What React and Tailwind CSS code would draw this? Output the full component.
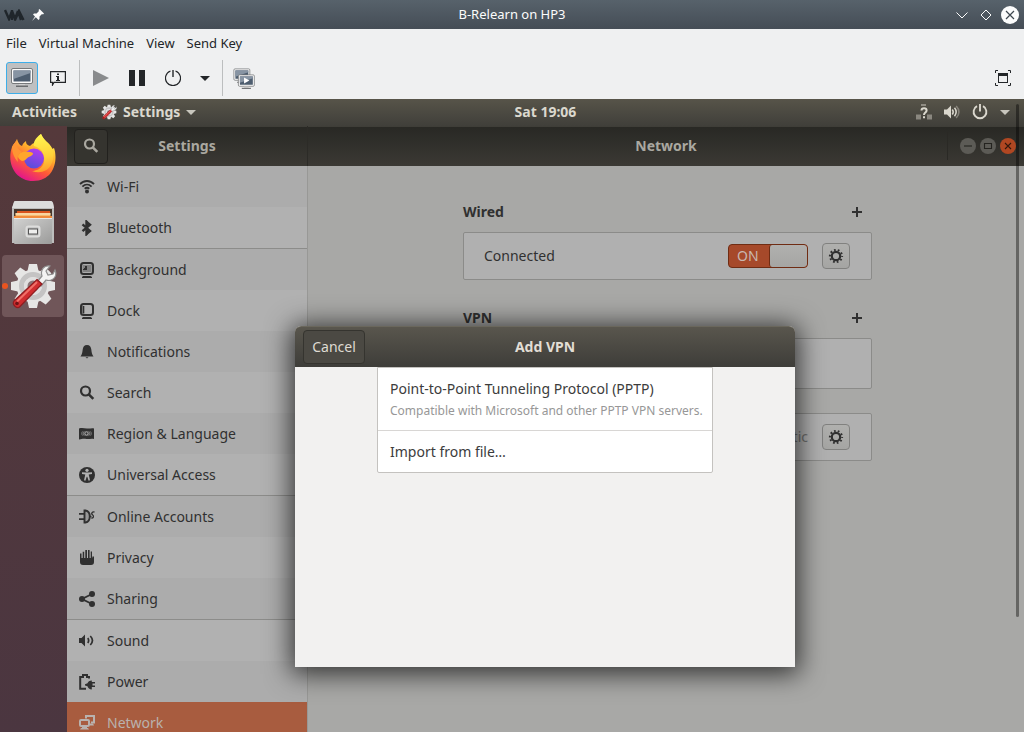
import React from "react";

function Sym({ children, size = 16, className = "" }) {
  return (
    <svg width={size} height={size} viewBox="0 0 16 16" fill="currentColor" aria-hidden="true" className={"shrink-0 " + className}>
      {children}
    </svg>
  );
}

const stroke = (w, extra = {}) => ({ fill: "none", stroke: "currentColor", strokeWidth: w, ...extra });

const WifiIcon = () => (
  <Sym>
    <g {...stroke(1.8)}>
      <path d="M1 5.200C4.700 0.900 11.300 0.900 15 5.200" />
      <path d="M3.400 7.600C6.100 4.900 9.900 4.900 12.600 7.600" />
      <path d="M5.700 9.700C7.200 8.400 8.800 8.400 10.300 9.700" />
    </g>
    <circle cx="8" cy="12.600" r="2" />
  </Sym>
);
const BluetoothIcon = () => (
  <Sym>
    <path {...stroke(2.400)} d="M3.500 4.400L11 10.900L7.800 13.700V2L11 4.700L3.500 11.200" />
    <path d="M6.500 0L8.500 1L8.500 15L6.500 16Z" />
  </Sym>
);
const ScreenBase = () => (
  <>
    <rect x="2" y="1" width="12" height="11" rx="2.500" {...stroke(2)} />
    <path d="M4 14H11.500L13 15V16H3V15Z" />
  </>
);
const BackgroundIcon = () => (
  <Sym>
    <ScreenBase />
    <rect x="3.500" y="3" width="9" height="7" opacity="0.350" />
    <path d="M4 7H5V6H6V4H8V8H4Z" />
  </Sym>
);
const DockIcon = () => (
  <Sym>
    <ScreenBase />
    <rect x="3.500" y="3" width="1.800" height="7.500" />
  </Sym>
);
const BellIcon = () => (
  <Sym>
    <path d="M8 1C10.800 1 12 2.800 12.300 5.500C12.700 9 13 10.500 14.500 12.500H1.500C3 10.500 3.300 9 3.700 5.500C4 2.800 5.200 1 8 1ZM6.500 13.300H9.500L8 14.500Z" />
  </Sym>
);
const SearchIcon = () => (
  <Sym>
    <circle cx="6.500" cy="6" r="4.500" {...stroke(2.200)} />
    <path d="M9.800 9.300L14.300 13.800" {...stroke(2.600)} />
  </Sym>
);
const RegionIcon = () => (
  <Sym>
    <path d="M0 2.500C3 1.500 5 2.300 8 2.500C11 2.800 13 1.700 15 2.500V13C12 12.200 10 13.500 7.500 13C4.500 12.400 3 12.800 0 13.500Z" />
    <g fill="none" stroke="#a9a9a9" strokeWidth="0.700">
      <circle cx="7.500" cy="7.500" r="1.700" strokeWidth="1.100" />
      <path d="M5.200 5.300C4 7 4 8 5.200 9.700M9.800 5.300C11 7 11 8 9.800 9.700M3.400 5.500C2.600 7 2.600 8 3.400 9.500M11.600 5.500C12.400 7 12.400 8 11.600 9.500" />
    </g>
  </Sym>
);
const AccessIcon = () => (
  <Sym>
    <circle cx="8" cy="8" r="8" />
    <g fill="#b1b1b1">
      <circle cx="8" cy="3.300" r="1.600" />
      <path d="M3 5.300L7 5.500H9L13 5.300V7L9.700 7.400L11 13.300L9.600 13.700L8.300 9.800H7.700L6.400 13.700L5 13.300L6.300 7.400L3 7Z" />
    </g>
  </Sym>
);
const OnlineIcon = () => (
  <Sym>
    <path d="M0 4H5V5.800H0ZM0 9.200H5V11H0Z" />
    <path d="M5.500 1.500H6.500C12.200 2.500 12.200 12.500 6.500 13.500H5.500Z" fill="currentColor" fillOpacity="0.150" stroke="currentColor" strokeWidth="1.900" />
    <path d="M10.500 7.500H12.500M15.500 3C13 2.600 11.800 4.600 13.500 5.700C15.300 7 14.500 9.300 12.300 9.200" {...stroke(1.300)} />
  </Sym>
);
const HandIcon = () => (
  <Sym>
    <path d="M3.700 1.800H5.200V8H6.300V0H8V8H9V0H10.600V8H11.700V1.500H13V8.500L13.500 6.500H15V12C15 14 14 15 12 15H4C2 15 1 14 1 12V3.500H2.500V8H3.700Z" />
  </Sym>
);
const ShareIcon = () => (
  <Sym>
    <path d="M13 3L3 8L13 13" {...stroke(1.900)} />
    <circle cx="13" cy="3" r="3" />
    <circle cx="3" cy="8" r="3" />
    <circle cx="13" cy="13" r="3" />
  </Sym>
);
const SoundIcon = () => (
  <Sym>
    <path d="M0 5H2.500L6 1.500V13.500L2.500 10H0Z" />
    <path d="M8.800 5C9.800 6.500 9.800 8.500 8.800 10M11.300 3C14 5.800 14 9.200 11.300 12" {...stroke(1.700)} />
  </Sym>
);
const PowerBatteryIcon = () => (
  <Sym>
    <path d="M10 4.500V3H8V1H4V3H1.200V14.800H7" {...stroke(2)} />
    <path d="M6 10.300L8.500 9.300C9 7.600 10.500 6.700 12.800 6.500V8H16V9.500H13.500V11.500H16V13H12.800V15.500C10.500 15.300 9 14.200 8.500 12.300L6 11.500Z" />
  </Sym>
);
const NetworkIcon = () => (
  <Sym>
    <path d="M7 3.500V1H15V7.500H12" {...stroke(2)} />
    <rect x="1" y="5" width="9" height="6" rx="1" {...stroke(2)} />
    <path d="M3 11.500H8V13H9L10 14.500H1L2 13H3ZM11 8.500H14L15 10.500H11Z" />
  </Sym>
);
const GearIcon = () => (
  <Sym>
    <circle cx="8" cy="8" r="4.200" {...stroke(2.200)} />
    <circle cx="8" cy="8" r="6.100" {...stroke(2, { strokeDasharray: "1.700 2.133", strokeDashoffset: "0.850" })} />
  </Sym>
);
const PlusIcon = () => (
  <Sym>
    <path d="M3 7H13V9H3ZM7 3H9V13H7Z" />
  </Sym>
);

function SettingsLogo({ size }) {
  return (
    <svg width={size} height={size} viewBox="0 0 48 48" aria-hidden="true" className="shrink-0">
      <g fill="#e6e6e5">
        <circle cx="24" cy="24" r="16.500" />
        {[0, 45, 90, 135, 180, 225, 270, 315].map((a) => (
          <path key={a} transform={`rotate(${a} 24 24)`} d="M18.500 9L20 2H28L29.500 9Z" />
        ))}
      </g>
      <circle cx="24" cy="24" r="11.500" fill="none" stroke="#c4c3c3" strokeWidth="5" />
      <circle cx="24" cy="24" r="9" fill="#e0dfdf" />
      <circle cx="24" cy="24" r="5.500" fill="#8b7679" />
      <path d="M28 20L33 14C31 8 35 3 41 4L37 9L39 13L44 12L46 8C49 15 43 20 37 18L32 24Z" fill="#f4f4f3" stroke="#8f8f8f" strokeWidth="1.200" />
      <path d="M28 17.500L33 22L11 44.500C8 47.500 2.500 42.500 5 39Z" fill="#d02d2f" stroke="#8f1d20" strokeWidth="1.200" />
      <path d="M28 20L8 39.500" stroke="#f07068" strokeWidth="2" />
      <circle cx="8" cy="41.500" r="1.800" fill="#6e1517" />
    </svg>
  );
}

function FirefoxLogo() {
  return (
    <svg width="48" height="48" viewBox="0 0 48 48" aria-hidden="true">
      <defs>
        <linearGradient id="ffOuter" x1="0.850" y1="0.100" x2="0.350" y2="1">
          <stop offset="0" stopColor="#fff44f" />
          <stop offset="0.350" stopColor="#ffb02b" />
          <stop offset="0.650" stopColor="#ff5a36" />
          <stop offset="1" stopColor="#e3158c" />
        </linearGradient>
        <linearGradient id="ffGlobe" x1="0.700" y1="0" x2="0.300" y2="1">
          <stop offset="0" stopColor="#b63af0" />
          <stop offset="1" stopColor="#5450d8" />
        </linearGradient>
        <linearGradient id="ffFlame" x1="0.500" y1="0" x2="0.600" y2="1">
          <stop offset="0" stopColor="#fff64f" />
          <stop offset="0.600" stopColor="#ffd13a" />
          <stop offset="1" stopColor="#ff9a2a" />
        </linearGradient>
      </defs>
      <path d="M3 13C5 9 7 8 8 5C9 8 10 11 13 12C14 9 16 8 17 7C17 10 18 11 21 12C23 10 24 9 26 9L28 8C27 5 30 2 32 0C35 7 40 9 43 15L45 14C49 25 46 47 24 47C7 47 -3 30 3 13Z" fill="url(#ffOuter)" />
      <circle cx="25" cy="24.500" r="10" fill="url(#ffGlobe)" />
      <path d="M32 0C26 4 24 9 25 12C33 14 37 21 34.500 30C32 35 27 37 23 37C31 40 39 37 42 31C46 24 44 17 43 14C40 8 35 7 32 0Z" fill="url(#ffFlame)" />
      <path d="M10 20C13 17 17 18 21 18C25 18.500 25 20.500 21 22.500C17 24 17 27 13 27C9 25 8 22 10 20Z" fill="#ffa62b" />
      <path d="M8 5C7 11 8 15 13 18C9 20 8 23 9 28C5 24 3 18 3 13C5 9 7 8 8 5Z" fill="#ff9433" />
    </svg>
  );
}

function FilesLogo() {
  return (
    <svg width="48" height="48" viewBox="0 0 48 48" aria-hidden="true">
      <defs>
        <linearGradient id="cabinet" x1="0" y1="0" x2="1" y2="1">
          <stop offset="0" stopColor="#d2d2d1" />
          <stop offset="1" stopColor="#9b9b9a" />
        </linearGradient>
      </defs>
      <path d="M5 3Q5 2 7 2H42Q43 2 44 4L45 9V44H3V9Z" fill="#bdbdbc" />
      <path d="M3 9L5 3Q5 2 7 2H42Q43 2 44 4L45 9Z" fill="#dcdcdb" />
      <rect x="5" y="10" width="38" height="10" fill="#47362c" />
      <rect x="8" y="12" width="33" height="3" fill="#d9541e" />
      <rect x="6.500" y="14" width="35" height="4" fill="#f5bb72" />
      <rect x="6.500" y="14.500" width="35" height="1" fill="#fff0cf" />
      <path d="M5 17H43V20H5Z" fill="#f28b3c" />
      <rect x="5" y="19" width="38" height="26" rx="1" fill="url(#cabinet)" />
      <path d="M5 19.500H43" stroke="#e9e9e8" />
      <rect x="17.500" y="27.500" width="13" height="10" rx="2" fill="#b6b6b6" stroke="#dddddc" strokeWidth="2" />
      <rect x="19.500" y="30" width="9" height="5" fill="#eeeeed" stroke="#555" />
    </svg>
  );
}

function Monitor({ x, y, s, play }) {
  return (
    <g transform={`translate(${x} ${y}) scale(${s})`}>
      <rect x="0.500" y="0.500" width="21" height="15" rx="1.500" fill="#fafafa" stroke="#77797b" />
      <rect x="2.500" y="2.500" width="17" height="11" fill="#4d5d6f" />
      <path d="M2.500 2.500H19.500V5L2.500 11Z" fill="#8794a3" />
      <path d="M8 16H14V17.500H8Z" fill="#cfcfcf" />
      <path d="M5 17.500H17V19H5Z" fill="#6a6c6e" />
      {play && <path d="M8 4L15 8L8 12Z" fill="#fff" />}
    </g>
  );
}

const GROUPS = [
  [
    ["Wi-Fi", WifiIcon],
    ["Bluetooth", BluetoothIcon],
  ],
  [
    ["Background", BackgroundIcon],
    ["Dock", DockIcon],
    ["Notifications", BellIcon],
    ["Search", SearchIcon],
    ["Region & Language", RegionIcon],
    ["Universal Access", AccessIcon],
  ],
  [
    ["Online Accounts", OnlineIcon],
    ["Privacy", HandIcon],
    ["Sharing", ShareIcon],
  ],
  [
    ["Sound", SoundIcon],
    ["Power", PowerBatteryIcon],
    ["Network", NetworkIcon],
  ],
];

function TitleBar() {
  return (
    <header className="grid h-[29px] shrink-0 grid-cols-[1fr_auto_1fr] items-center bg-linear-to-b from-[#57626b] to-[#454d56] px-1 text-[13px] text-[#fcfcfc]">
      <div className="flex items-center gap-1.5">
        <svg width="21" height="12" viewBox="0 0 21 12" aria-hidden="true" fill="none" stroke="#20262b" strokeWidth="2.400">
          <path d="M1 1L5 10L8 2M8 1V11M8 2L11 10L14 2M11 11L15 2L19.500 11M14 2L17 11" />
        </svg>
        <button aria-label="Pin window">
          <svg width="14" height="14" viewBox="0 0 14 14" aria-hidden="true" fill="#fcfcfc">
            <path d="M8.500 1L13 5.500L12 6.500L11 6L8.500 8.500V11L7.500 12L4.800 9.200L1 13L4 8.400L2 6.500L3 5.500H5.500L8 3L7.500 2Z" />
          </svg>
        </button>
      </div>
      <h1>B-Relearn on HP3</h1>
      <div className="flex items-center justify-end gap-1">
        <button aria-label="Minimize" className="flex size-5 items-center justify-center">
          <svg width="12" height="12" viewBox="0 0 12 12" aria-hidden="true" fill="none" stroke="#fcfcfc">
            <path d="M0.500 3.500L6 9L11.500 3.500" />
          </svg>
        </button>
        <button aria-label="Maximize" className="flex size-5 items-center justify-center">
          <svg width="12" height="12" viewBox="0 0 12 12" aria-hidden="true" fill="none" stroke="#fcfcfc">
            <path d="M6 1L11 6L6 11L1 6Z" />
          </svg>
        </button>
        <button aria-label="Close" className="flex size-5 items-center justify-center">
          <svg width="18" height="18" viewBox="0 0 18 18" aria-hidden="true">
            <circle cx="9" cy="9" r="9" fill="#fcfcfc" />
            <path d="M5 5L13 13M13 5L5 13" stroke="#3e474f" strokeWidth="1.200" />
          </svg>
        </button>
      </div>
    </header>
  );
}

function ViewerToolbar() {
  const cell = "flex size-8 items-center justify-center";
  return (
    <div className="flex h-[41px] shrink-0 items-center gap-1 bg-[#eff0f1] px-1.5 pb-px text-[#232629]">
      <button aria-label="Console" className="flex size-8 items-center justify-center rounded-[3px] border border-[#3daee9] bg-[#bfc0c1]">
        <svg width="22" height="20" viewBox="0 0 22 20" aria-hidden="true">
          <Monitor x={0} y={0} s={1} />
        </svg>
      </button>
      <button aria-label="Details" className={cell}>
        <svg width="16" height="16" viewBox="0 0 16 16" aria-hidden="true">
          <path d="M0.600 1.600H15.400V12.400H4L2.500 15V12.400H0.600Z" fill="none" stroke="#232629" strokeWidth="1.200" />
          <path d="M7 3.500H9V5H7ZM6 6H9V10H10V11H6V10H7V7H6Z" fill="#232629" />
        </svg>
      </button>
      <div className="mx-px h-9 w-px bg-[#bcbebf]" />
      <button aria-label="Run" className={cell}>
        <svg width="16" height="16" viewBox="0 0 16 16" aria-hidden="true">
          <path d="M0 0L16 8L0 16Z" fill="#898b8d" />
        </svg>
      </button>
      <button aria-label="Pause" className={cell}>
        <svg width="16" height="16" viewBox="0 0 16 16" aria-hidden="true" fill="#232629">
          <path d="M0 0H6V16H0ZM10 0H16V16H10Z" />
        </svg>
      </button>
      <button aria-label="Shut down" className={cell}>
        <svg width="16" height="16" viewBox="0 0 16 16" aria-hidden="true" fill="none" stroke="#232629">
          <path d="M5.500 1A7.500 7.500 0 1 0 10.500 1" strokeWidth="1.200" />
          <path d="M8 0V7" strokeWidth="1.400" />
        </svg>
      </button>
      <button aria-label="Shut down options" className="flex h-8 w-6 items-center justify-center">
        <svg width="10" height="5" viewBox="0 0 10 5" aria-hidden="true" fill="#232629">
          <path d="M0 0H10L5 5Z" />
        </svg>
      </button>
      <div className="mx-px h-9 w-px bg-[#bcbebf]" />
      <button aria-label="Snapshots" className={cell}>
        <svg width="22" height="21" viewBox="0 0 22 21" aria-hidden="true">
          <Monitor x={0.500} y={0.500} s={0.76} />
          <Monitor x={5} y={6.500} s={0.76} play />
        </svg>
      </button>
      <button aria-label="Full screen" className="ml-auto flex h-8 w-[30px] items-center justify-center">
        <svg width="16" height="16" viewBox="0 0 16 16" aria-hidden="true" fill="none" stroke="#232629">
          <path d="M0.500 3V0.500H3M13 0.500H15.500V3M15.500 13V15.500H13M3 15.500H0.500V13" />
          <rect x="3.500" y="3.500" width="9" height="9" />
          <path d="M3 4.500H13" strokeWidth="3" />
        </svg>
      </button>
    </div>
  );
}

function TopBar() {
  return (
    <div className="grid h-[27px] shrink-0 grid-cols-[67px_1fr_auto_1fr] items-center bg-linear-to-b from-[#575449] to-[#403f3a] pb-px text-sm font-bold text-[#dbd8ce]">
      <div className="col-span-2 flex items-center gap-6 pl-3">
        <button>Activities</button>
        <button className="flex items-center gap-1.5">
          <SettingsLogo size={16} />
          Settings
          <svg width="10" height="5" viewBox="0 0 10 5" aria-hidden="true" fill="#c8c6bd"><path d="M0 0H10L5 5Z" /></svg>
        </button>
      </div>
      <button>Sat 19:06</button>
      <button aria-label="System menu" className="flex items-center justify-end gap-3 pr-3.5">
        <Sym>
          <path d="M5 0H10V2H5ZM0 10.500H5V15.500H0ZM11 10.500H16V15.500H11Z" opacity="0.450" />
          <path d="M5.500 6.500C5.500 3.500 10.600 3.500 10.600 6.500C10.600 8.700 8 8.500 8 11" {...stroke(2)} />
          <path d="M7 12.300H9V14.300H7Z" />
        </Sym>
        <Sym>
          <path d="M0 5.500H3L7 1.500V14.500L3 10.500H0Z" />
          <path d="M8.300 5.500C9.400 7 9.400 9 8.300 10.500M10.500 3.800C12.500 6.300 12.500 9.700 10.500 12.200" {...stroke(1.500)} />
          <path d="M12.200 2C15.800 5.500 15.800 10.500 12.200 14" {...stroke(1.600)} opacity="0.400" />
        </Sym>
        <Sym>
          <path d="M5 2.200A6.400 6.400 0 1 0 11 2.200M8 0V7.500" {...stroke(1.900)} />
        </Sym>
        <svg width="10" height="5" viewBox="0 0 10 5" aria-hidden="true" fill="#c8c6bd"><path d="M0 0H10L5 5Z" /></svg>
      </button>
    </div>
  );
}

function Launcher() {
  return (
    <nav aria-label="Dock" className="flex w-[67px] shrink-0 flex-col items-center bg-linear-to-b from-[#55393b] to-[#4b3640] pr-px">
      <button aria-label="Firefox" className="flex size-16 items-center justify-center">
        <FirefoxLogo />
      </button>
      <button aria-label="Files" className="flex h-[65px] w-16 items-center justify-center">
        <FilesLogo />
      </button>
      <button aria-label="Settings" className="relative flex h-[62px] w-[62px] items-center justify-center rounded bg-[#705659]">
        <SettingsLogo size={48} />
        <span className="absolute left-0 top-7 size-1.5 rounded-full bg-[#e95420]" />
      </button>
    </nav>
  );
}

function WindowHeader() {
  return (
    <div className="flex h-10 shrink-0 items-stretch bg-linear-to-b from-[#282824] to-[#3b3934] text-sm font-bold text-[#aaa8a0] shadow-[inset_0_1px_0_#3f3e38]">
      <div className="grid w-60 grid-cols-[50px_1fr_50px] items-center">
        <button aria-label="Search settings" className="ml-[7px] flex h-[35px] w-[34px] items-center justify-center rounded border border-[#22211e] bg-[#35342f]">
          <SearchIcon />
        </button>
        <h2 className="text-center">Settings</h2>
      </div>
      <div className="grid flex-1 grid-cols-[1fr_auto_1fr] items-center border-l border-[#2c2b27]">
        <h2 className="col-start-2">Network</h2>
        <div className="flex items-center justify-end gap-1 pr-2">
          <div className="mr-2 h-7 w-px bg-[#2a2925]" />
          {[
            ["Minimize", "M4 8H12"],
            ["Maximize", "M4.500 5.500H11.500V10.500H4.500Z"],
            ["Close", "M5 5L11 11M11 5L5 11"],
          ].map(([label, d]) => (
            <button
              key={label}
              aria-label={label}
              className={
                label === "Close"
                  ? "size-4 rounded-full bg-[#b04722] text-[#33180c]"
                  : "size-4 rounded-full bg-[#5c5b56] text-[#24231f]"
              }
            >
              <Sym>
                <path d={d} {...stroke(1.100)} />
              </Sym>
            </button>
          ))}
        </div>
      </div>
    </div>
  );
}

function Sidebar() {
  return (
    <nav aria-label="Settings panels" className="flex w-[241px] shrink-0 flex-col overflow-hidden border-r border-[#989896] bg-[#b1b1b1]">
      {GROUPS.map((group, g) => (
        <ul key={g} className="border-b border-[#8c8c8a] last:border-b-0">
          {group.map(([label, Icon]) => (
            <li
              key={label}
              className={
                label === "Network"
                  ? "bg-[#a85c3f]! text-[#b9b2ae]"
                  : g === 3
                    ? "text-[#303030] even:bg-[#acacac]"
                    : "text-[#303030] odd:bg-[#acacac]"
              }
            >
              <a href="#" className="flex h-[41px] items-center gap-3 px-3">
                <Icon />
                {label}
              </a>
            </li>
          ))}
        </ul>
      ))}
    </nav>
  );
}

function GearButton({ label }) {
  return (
    <button aria-label={label} className="flex h-[26px] w-7 items-center justify-center rounded border border-[#81817f] bg-linear-to-b from-[#b0b0ae] to-[#a5a5a3]">
      <GearIcon />
    </button>
  );
}

function SectionTitle({ children }) {
  return (
    <div className="flex h-5 items-center justify-between pr-[7px]">
      <h3 className="font-bold">{children}</h3>
      <button aria-label={"Add " + children + " connection"}>
        <PlusIcon />
      </button>
    </div>
  );
}

function NetworkPanel() {
  const box = "flex items-center rounded-xs border border-[#8b8b89] bg-[#b0b0b0] pl-5 pr-[21px]";
  return (
    <main className="flex-1 bg-[#a8a8a6] pl-[3px] text-[#303030]">
      <div className="mx-auto flex w-[409px] flex-col pt-9">
        <SectionTitle>Wired</SectionTitle>
        <div className={box + " mt-2.5 h-12"}>
          <span className="flex-1">Connected</span>
          <label className="mr-3.5 flex h-6 w-20 overflow-hidden rounded border border-[#6f2c13] bg-[#a6492a]">
            <input type="checkbox" role="switch" defaultChecked aria-label="Wired connection" className="sr-only" />
            <span className="flex-1 pl-2 leading-[22px] text-[#c9b7b0]">ON</span>
            <span className="w-[38px] rounded-[3px] border-l border-[#6f2c13] bg-linear-to-b from-[#b0b0ae] to-[#a5a5a3]" />
          </label>
          <GearButton label="Wired settings" />
        </div>
        <div className="mt-7">
          <SectionTitle>VPN</SectionTitle>
        </div>
        <div className={box + " mt-2.5 h-[51px] justify-center"}>Not set up</div>
        <div className={box + " mt-6 h-12"}>
          <span className="flex-1">Network Proxy</span>
          <span className="mr-3.5 text-[#6f6f6e]">Automatic</span>
          <GearButton label="Proxy settings" />
        </div>
      </div>
    </main>
  );
}

function AddVpnDialog() {
  return (
    <div className="absolute inset-0 flex items-start justify-center pr-px pt-[200px]">
      <section role="dialog" aria-labelledby="vpn-title" className="flex min-h-[341px] w-[500px] flex-col items-center rounded-t-md bg-[#f2f1f0] shadow-[0_3px_26px_4px_rgba(0,0,0,0.7)]">
        <div className="grid h-[41px] w-full grid-cols-[1fr_auto_1fr] items-center rounded-t-md border-t border-[#6a675c] bg-linear-to-b from-[#59564d] to-[#3e3d39] px-2">
          <button className="h-[34px] w-[62px] rounded border border-[#35342f] bg-[#4b4943] text-[#dfdbd2]">Cancel</button>
          <h2 id="vpn-title" className="font-bold text-[#e2ded5]">Add VPN</h2>
        </div>
        <ul className="w-[336px] rounded-b-xs border border-[#c4c2bf] bg-white text-[#3c3c3c]">
          <li className="border-b border-[#d8d6d4]">
            <button className="block h-[62px] w-full px-3 text-left">
              <span className="block leading-5">Point-to-Point Tunneling Protocol (PPTP)</span>
              <span className="mt-1 block text-xs whitespace-nowrap text-[#979797]">Compatible with Microsoft and other PPTP VPN servers.</span>
            </button>
          </li>
          <li>
            <button className="block h-[41px] w-full px-3 text-left">Import from file…</button>
          </li>
        </ul>
      </section>
    </div>
  );
}

export default function App() {
  return (
    <div className="relative flex h-screen flex-col overflow-hidden bg-[#eff0f1] font-['Noto_Sans',sans-serif] text-sm">
      <TitleBar />
      <div className="flex h-[29px] shrink-0 items-center gap-3 px-1.5 text-[13px] text-[#232629]">
        <button>File</button>
        <button>Virtual Machine</button>
        <button>View</button>
        <button>Send Key</button>
      </div>
      <ViewerToolbar />
      <TopBar />
      <div className="flex min-h-0 flex-1">
        <Launcher />
        <div className="relative flex min-w-0 flex-1 flex-col">
          <WindowHeader />
          <div className="flex min-h-0 flex-1">
            <Sidebar />
            <NetworkPanel />
          </div>
          <AddVpnDialog />
        </div>
      </div>
      <div className="absolute right-[5px] top-[104px] h-[513px] w-[3px] rounded-full bg-black/40" />
    </div>
  );
}
